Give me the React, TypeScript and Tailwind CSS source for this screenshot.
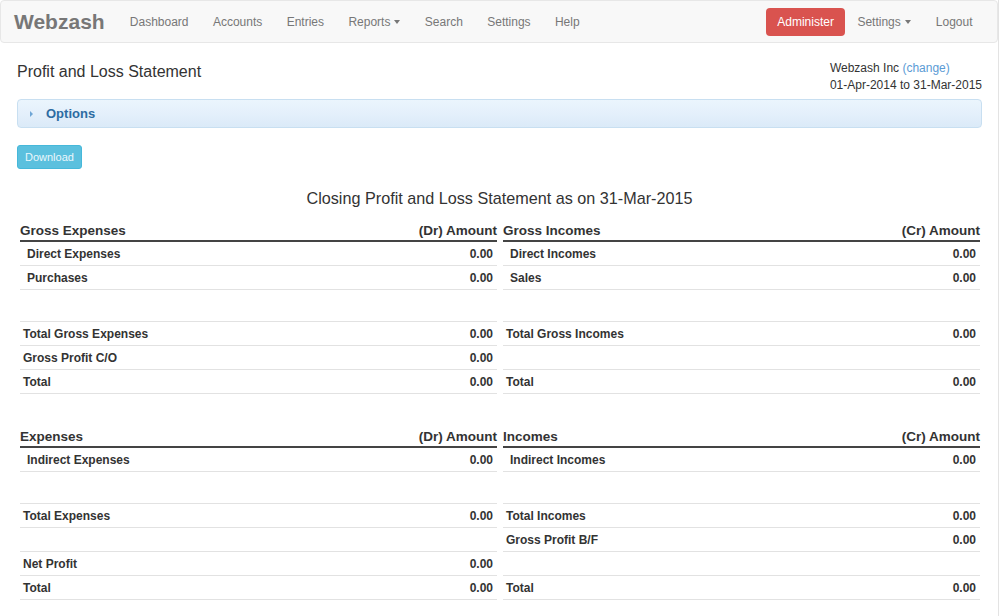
import React from 'react';

type Row = { label?: string; amount?: string; kind?: 'entry' | 'total' | 'empty' | 'spacer' };

const navLinks = ['Dashboard', 'Accounts', 'Entries', 'Reports', 'Search', 'Settings', 'Help'];

const Caret = () => (
  <span className="ml-[4px] inline-block h-0 w-0 border-x-[3.5px] border-t-[4px] border-x-transparent border-t-[#777] align-middle" />
);

const Column = ({ title, amountTitle, rows }: { title: string; amountTitle: string; rows: Row[] }) => (
  <div>
    <div className="flex h-[20px] items-center justify-between border-b-2 border-[#444] text-[13.5px] font-bold leading-none text-[#333]">
      <span>{title}</span>
      <span>{amountTitle}</span>
    </div>
    {rows.map((row, i) => {
      if (row.kind === 'spacer') {
        return <div key={i} className="h-[32px] border-b border-[#e2e2e2]" />;
      }
      return (
        <div
          key={i}
          className={`flex h-[24px] items-center justify-between border-b border-[#e2e2e2] pr-[4px] text-[12px] font-bold text-[#333] ${
            row.kind === 'entry' ? 'pl-[7px]' : 'pl-[3px]'
          }`}
        >
          <span>{row.label}</span>
          <span>{row.amount}</span>
        </div>
      );
    })}
  </div>
);

export default function App() {
  const grossExpenses: Row[] = [
    { label: 'Direct Expenses', amount: '0.00', kind: 'entry' },
    { label: 'Purchases', amount: '0.00', kind: 'entry' },
    { kind: 'spacer' },
    { label: 'Total Gross Expenses', amount: '0.00', kind: 'total' },
    { label: 'Gross Profit C/O', amount: '0.00', kind: 'total' },
    { label: 'Total', amount: '0.00', kind: 'total' },
  ];
  const grossIncomes: Row[] = [
    { label: 'Direct Incomes', amount: '0.00', kind: 'entry' },
    { label: 'Sales', amount: '0.00', kind: 'entry' },
    { kind: 'spacer' },
    { label: 'Total Gross Incomes', amount: '0.00', kind: 'total' },
    { kind: 'empty' },
    { label: 'Total', amount: '0.00', kind: 'total' },
  ];
  const expenses: Row[] = [
    { label: 'Indirect Expenses', amount: '0.00', kind: 'entry' },
    { kind: 'spacer' },
    { label: 'Total Expenses', amount: '0.00', kind: 'total' },
    { kind: 'empty' },
    { label: 'Net Profit', amount: '0.00', kind: 'total' },
    { label: 'Total', amount: '0.00', kind: 'total' },
  ];
  const incomes: Row[] = [
    { label: 'Indirect Incomes', amount: '0.00', kind: 'entry' },
    { kind: 'spacer' },
    { label: 'Total Incomes', amount: '0.00', kind: 'total' },
    { label: 'Gross Profit B/F', amount: '0.00', kind: 'total' },
    { kind: 'empty' },
    { label: 'Total', amount: '0.00', kind: 'total' },
  ];

  return (
    <div className="min-h-[616px] w-[999px] border-r border-[#e3e3e3] bg-white font-['Liberation_Sans',Arial,sans-serif] text-[#333]">
      {/* navbar */}
      <div className="flex h-[43px] items-center justify-between rounded-[4px] border border-[#e7e7e7] bg-[#f8f8f8]">
        <div className="flex items-center">
          <span className="px-[13px] text-[21px] font-bold text-[#777]">Webzash</span>
          {navLinks.map(link => (
            <span key={link} className="flex items-center px-[12.2px] text-[12px] text-[#777]">
              {link}
              {link === 'Reports' && <Caret />}
            </span>
          ))}
        </div>
        <div className="flex items-center pr-[12px]">
          <span className="flex h-[28px] items-center rounded-[4px] bg-[#d9534f] px-[11px] text-[12px] text-white">
            Administer
          </span>
          <span className="flex items-center px-[12.5px] text-[12px] text-[#777]">
            Settings
            <Caret />
          </span>
          <span className="px-[12.5px] text-[12px] text-[#777]">Logout</span>
        </div>
      </div>

      <div className="pl-[17px] pr-[16px]">
        <div className="flex items-start justify-between pt-[17px]">
          <h1 className="pt-[3px] text-[16px] leading-[18px]">Profit and Loss Statement</h1>
          <div className="text-[12px] leading-[17px]">
            <div>
              Webzash Inc <span className="text-[#5b9bd5]">(change)</span>
            </div>
            <div>01-Apr-2014 to 31-Mar-2015</div>
          </div>
        </div>

        <div className="mt-[5px] flex h-[29px] items-center rounded-[4px] border border-[#c8dff1] bg-[linear-gradient(to_bottom,#ebf5fd_0%,#e3effb_55%,#dbeaf8_100%)]">
          <span className="ml-[12px] h-0 w-0 border-y-[3px] border-l-[3px] border-y-transparent border-l-[#6fa6d6]" />
          <span className="ml-[13px] text-[13px] font-bold text-[#2d6ca2]">Options</span>
        </div>

        <div className="mt-[17px] flex">
          <span className="flex h-[24px] items-center rounded-[3px] border border-[#46b8da] bg-[#5bc0de] px-[7px] text-[11px] text-[#eaf7fc]">
            Download
          </span>
        </div>

        <div className="mt-[19px] text-center text-[16.2px] leading-[20px]">
          Closing Profit and Loss Statement as on 31-Mar-2015
        </div>

        <div className="ml-[3px] mr-[2px] mt-[14px] grid grid-cols-2 gap-x-[6px]">
          <Column title="Gross Expenses" amountTitle="(Dr) Amount" rows={grossExpenses} />
          <Column title="Gross Incomes" amountTitle="(Cr) Amount" rows={grossIncomes} />
        </div>

        <div className="ml-[3px] mr-[2px] mt-[34px] grid grid-cols-2 gap-x-[6px]">
          <Column title="Expenses" amountTitle="(Dr) Amount" rows={expenses} />
          <Column title="Incomes" amountTitle="(Cr) Amount" rows={incomes} />
        </div>
      </div>
    </div>
  );
}
